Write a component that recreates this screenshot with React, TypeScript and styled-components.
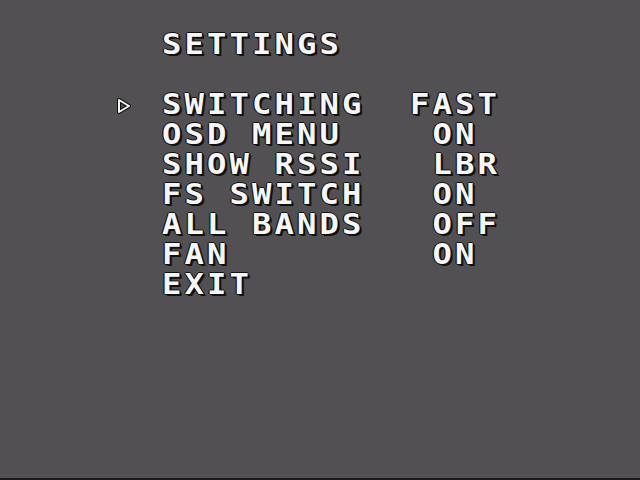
import React from "react"
import styled, { createGlobalStyle } from "styled-components"

const GlobalStyle = createGlobalStyle`
  html, body {
    margin: 0;
    padding: 0;
    background-color: #525053;
  }
`

const Screen = styled.div`
  width: 640px;
  height: 480px;
  overflow: hidden;
  box-sizing: border-box;
  background-color: #525053;
  border-bottom: 2px solid #1a1a1a;
  padding: 30px 0 0 117px;
  font-family: "DejaVu Sans Mono", "Liberation Mono", monospace;
  font-weight: bold;
  font-size: 28px;
  line-height: 30px;
  color: #f6f6f6;
  text-shadow: 1px 0 0 #111, -1px 0 0 #111, 0 1px 0 #111, 0 -1px 0 #111,
    1px 1px 0 #111, 2px 2px 0 #111;
`

const Menu = styled.div`
  display: grid;
  grid-template-columns: 45px 248px 120px;
  grid-auto-rows: 30px;
`

const Cell = styled.span<{ $col?: number }>`
  grid-column: ${(p) => p.$col ?? 2};
  white-space: pre;
  display: inline-block;
  letter-spacing: 2.7px;
  transform: scaleX(1.15);
  transform-origin: left center;
`

const Marker = styled.span`
  grid-column: 1;
  display: flex;
  align-items: center;
  height: 30px;
`

const Arrow = () => (
  <svg width="14" height="16" viewBox="0 0 14 16" style={{ marginTop: 2 }}>
    <path d="M2 2 L12 8 L2 14 Z" fill="none" stroke="#111" strokeWidth="4" strokeLinejoin="round" />
    <path d="M2 2 L12 8 L2 14 Z" fill="none" stroke="#f6f6f6" strokeWidth="2" strokeLinejoin="round" />
  </svg>
)

const Spacer = styled.div`
  grid-column: 1 / -1;
`

const items = [
  { label: "SWITCHING", value: "FAST", offset: 0 },
  { label: "OSD MENU", value: "ON", offset: 1 },
  { label: "SHOW RSSI", value: "LBR", offset: 1 },
  { label: "FS SWITCH", value: "ON", offset: 1 },
  { label: "ALL BANDS", value: "OFF", offset: 1 },
  { label: "FAN", value: "ON", offset: 1 },
  { label: "EXIT", value: "", offset: 0 },
]

const App = () => {
  const selected = 0
  return (
    <>
      <GlobalStyle />
      <Screen>
        <Menu>
          <Cell $col={2}>SETTINGS</Cell>
          <Spacer />
          {items.map((item, i) => (
            <React.Fragment key={item.label}>
              <Marker>{i === selected && <Arrow />}</Marker>
              <Cell $col={2}>{item.label}</Cell>
              <Cell $col={3}>{" ".repeat(item.offset) + item.value}</Cell>
            </React.Fragment>
          ))}
        </Menu>
      </Screen>
    </>
  )
}

export default App
